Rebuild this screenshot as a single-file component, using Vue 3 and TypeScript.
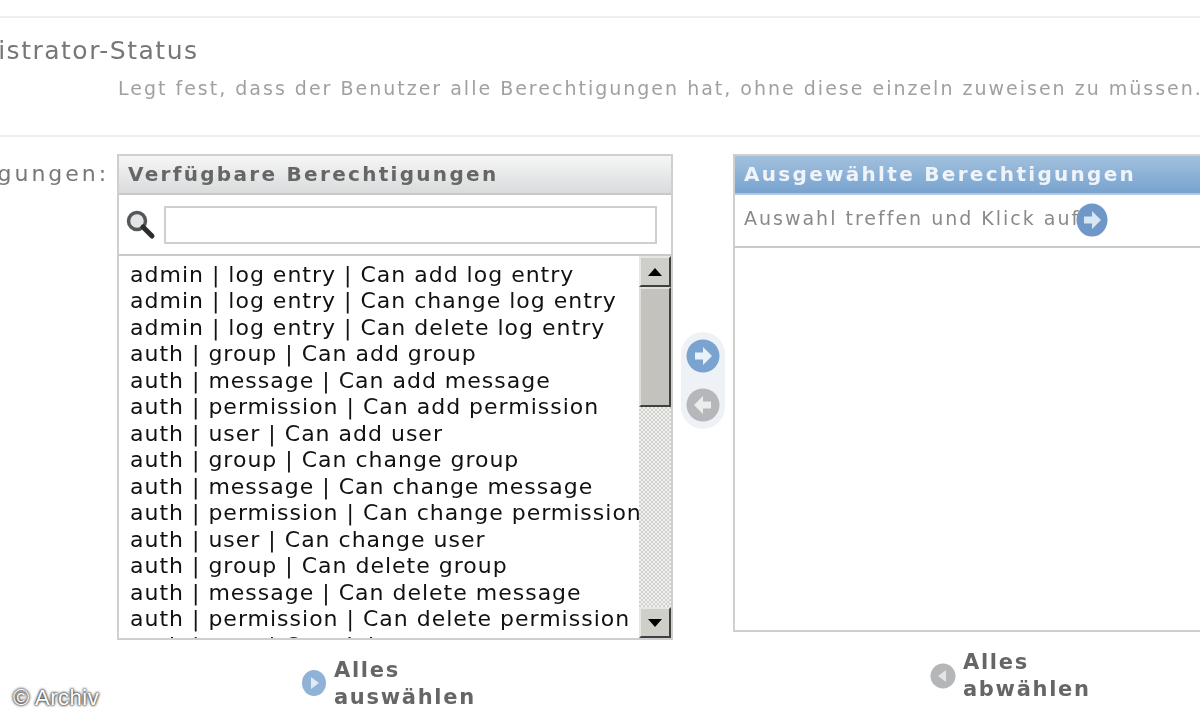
<script setup lang="ts">
const permissions: string[] = [
  "admin | log entry | Can add log entry",
  "admin | log entry | Can change log entry",
  "admin | log entry | Can delete log entry",
  "auth | group | Can add group",
  "auth | message | Can add message",
  "auth | permission | Can add permission",
  "auth | user | Can add user",
  "auth | group | Can change group",
  "auth | message | Can change message",
  "auth | permission | Can change permission",
  "auth | user | Can change user",
  "auth | group | Can delete group",
  "auth | message | Can delete message",
  "auth | permission | Can delete permission",
  "auth | user | Can delete user",
];
</script>

<template>
  <div class="page">
    <div class="blurred">
      <section class="status">
        <div class="status-label">Administrator-Status</div>
        <p class="help">Legt fest, dass der Benutzer alle Berechtigungen hat, ohne diese einzeln zuweisen zu müssen.</p>
      </section>

      <section class="picker">
        <div class="field-label">Berechtigungen:</div>

        <div class="column">
          <div class="box">
            <h2 class="box-title">Verfügbare Berechtigungen</h2>
            <div class="filter">
              <svg class="lens" width="32" height="32" viewBox="0 0 32 32">
                <circle cx="12" cy="12" r="8.5" fill="#e4e6e6" stroke="#55585a" stroke-width="3.5" />
                <path d="M18 18l9 9" stroke="#2c2c2c" stroke-width="5" stroke-linecap="round" />
              </svg>
              <input class="filter-input" type="text" />
            </div>
            <div class="list-wrap">
              <ul class="list">
                <li v-for="(p, i) in permissions" :key="i">{{ p }}</li>
              </ul>
              <div class="scrollbar">
                <div class="sb-btn"><span class="tri-up"></span></div>
                <div class="sb-thumb"></div>
                <div class="sb-track"></div>
                <div class="sb-btn"><span class="tri-down"></span></div>
              </div>
            </div>
          </div>
          <div class="bulk">
            <svg class="bulk-icon" width="26" height="28" viewBox="0 0 26 28">
              <ellipse cx="13" cy="14" rx="12" ry="13" fill="#8fb2d6" />
              <path d="M10 8l8 6-8 6z" fill="#dfeaf5" />
            </svg>
            <span class="bulk-text">Alles<br />auswählen</span>
          </div>
        </div>

        <div class="movers-col">
          <div class="movers">
            <svg width="34" height="34" viewBox="0 0 34 34">
              <circle cx="17" cy="17" r="16.5" fill="#7ba3cf" />
              <path d="M9 13.500h8V8l9 9-9 9v-5.500H9z" fill="#eaf1f8" />
            </svg>
            <svg width="34" height="34" viewBox="0 0 34 34">
              <circle cx="17" cy="17" r="16.5" fill="#b5b7ba" />
              <path d="M25 13.500h-8V8l-9 9 9 9v-5.500h8z" fill="#eceded" />
            </svg>
          </div>
        </div>

        <div class="column column-right">
          <div class="box box-right">
            <h2 class="box-title box-title-blue">Ausgewählte Berechtigungen</h2>
            <div class="hint">
              <span>Auswahl treffen und Klick auf</span>
              <svg class="hint-icon" width="32" height="34" viewBox="0 0 32 34">
                <ellipse cx="16" cy="17" rx="15.500" ry="16.500" fill="#6f98c8" />
                <path d="M8 13.500h8V8l9 9-9 9v-5.500H8z" fill="#d8e6f3" />
              </svg>
            </div>
          </div>
          <div class="bulk bulk-right">
            <svg width="26" height="26" viewBox="0 0 26 26">
              <circle cx="13" cy="13" r="12.500" fill="#b4b6b8" />
              <path d="M16 7l-8 6 8 6z" fill="#e4e5e6" />
            </svg>
            <span class="bulk-text">Alles<br />abwählen</span>
          </div>
        </div>
      </section>
    </div>

    <div class="watermark">© Archiv</div>
  </div>
</template>

<style>
html,
body {
  margin: 0;
  background: #fff;
}
</style>

<style scoped>
.page {
  position: relative;
  width: 1200px;
  height: 720px;
  overflow: hidden;
  background: #fff;
  font-family: "DejaVu Sans", sans-serif;
}

.blurred {
  filter: blur(0.6px);
  padding-top: 16px;
}

.status {
  box-sizing: border-box;
  height: 121px;
  padding-top: 18px;
  border-top: 2px solid #eeeeee;
  border-bottom: 2px solid #efefef;
}

.status-label {
  margin-left: -89px;
  font-size: 25px;
  line-height: 30px;
  letter-spacing: 1.5px;
  color: #777;
  white-space: nowrap;
}

.help {
  margin: 10px 0 0 118px;
  font-size: 19px;
  line-height: 24px;
  letter-spacing: 2px;
  color: #a0a0a0;
  white-space: nowrap;
}

.picker {
  display: flex;
  padding-top: 17px;
  margin-left: -118px;
}

.field-label {
  width: 235px;
  flex: none;
  font-size: 22px;
  line-height: 40px;
  letter-spacing: 3px;
  color: #777;
  white-space: nowrap;
}

.column {
  width: 556px;
  flex: none;
}

.box {
  height: 486px;
  box-sizing: border-box;
  border: 2px solid #cfcfcf;
  background: #fff;
  display: flex;
  flex-direction: column;
}

.box-title {
  margin: 0;
  height: 37px;
  flex: none;
  padding-left: 9px;
  font-size: 20px;
  line-height: 36px;
  font-weight: 700;
  letter-spacing: 2.300px;
  color: #666;
  background: linear-gradient(#f6f6f6, #d9dbdc);
  border-bottom: 2px solid #c9c9c9;
  white-space: nowrap;
  overflow: hidden;
}

.box-title-blue {
  color: #eef4fa;
  background: linear-gradient(#a2c0dd, #78a3cf);
  border-bottom-color: #b5c8dc;
}

.filter {
  display: flex;
  align-items: center;
  gap: 7px;
  height: 61px;
  flex: none;
  padding: 0 14px 0 6px;
  box-sizing: border-box;
  border-bottom: 2px solid #c9c9c9;
}

.lens {
  flex: none;
}

.filter-input {
  flex: 1;
  min-width: 0;
  height: 38px;
  box-sizing: border-box;
  border: 2px solid #cfcfcf;
  background: #fff;
}

.list-wrap {
  flex: 1;
  min-height: 0;
  display: flex;
  overflow: hidden;
}

.list {
  flex: 1;
  min-width: 0;
  margin: 0;
  padding: 5.500px 0 0 11px;
  list-style: none;
  overflow: hidden;
  font-size: 22px;
  line-height: 26.500px;
  letter-spacing: 1px;
  color: #111;
  white-space: nowrap;
}

.scrollbar {
  width: 32px;
  flex: none;
  display: flex;
  flex-direction: column;
}

.sb-btn {
  height: 31px;
  flex: none;
  box-sizing: border-box;
  display: flex;
  align-items: center;
  justify-content: center;
  background: #cfcfca;
  border: 2px solid;
  border-color: #e6e6e2 #404040 #404040 #e6e6e2;
}

.tri-up {
  border: 7px solid transparent;
  border-top: 0;
  border-bottom: 8px solid #000;
}

.tri-down {
  border: 7px solid transparent;
  border-bottom: 0;
  border-top: 8px solid #000;
}

.sb-thumb {
  height: 120px;
  flex: none;
  box-sizing: border-box;
  background: #c4c2bc;
  border: 2px solid;
  border-color: #dededa #404040 #404040 #dededa;
}

.sb-track {
  flex: 1;
  background: repeating-conic-gradient(#d0d0cc 0 25%, #f2f2f0 0 50%) 0 0 / 4px 4px;
}

.movers-col {
  width: 60px;
  flex: none;
  display: flex;
  justify-content: center;
  align-items: flex-start;
  padding-top: 178px;
}

.movers {
  display: flex;
  flex-direction: column;
  align-items: center;
  gap: 15px;
  padding: 7px 5px;
  border-radius: 23px;
  background: #eef1f5;
}

.column-right {
  flex: 1;
  min-width: 0;
  margin-right: -20px;
}

.box-right {
  height: 478px;
  border-right: 0;
}

.hint {
  height: 53px;
  flex: none;
  box-sizing: border-box;
  display: flex;
  align-items: center;
  padding: 0 0 6px 9px;
  border-bottom: 2px solid #c9c9c9;
  font-size: 19px;
  letter-spacing: 2px;
  color: #8a8a8a;
  white-space: nowrap;
}

.hint-icon {
  flex: none;
  margin-left: -4px;
  margin-top: 4px;
}

.bulk {
  display: flex;
  align-items: center;
  gap: 7px;
  margin: 17px 0 0 184px;
}

.bulk-icon {
  margin-top: -3px;
}

.bulk-right {
  margin: 17px 0 0 197px;
}

.bulk-text {
  font-size: 21px;
  line-height: 27px;
  font-weight: 700;
  letter-spacing: 1.700px;
  color: #666;
}

.watermark {
  position: absolute;
  left: 13px;
  top: 685px;
  font-family: "Liberation Sans", sans-serif;
  font-size: 22px;
  line-height: 26px;
  letter-spacing: 0.500px;
  color: #fff;
  text-shadow: 0 0 3px #444, 0 0 3px #444, 0 0 2px #444;
}
</style>
